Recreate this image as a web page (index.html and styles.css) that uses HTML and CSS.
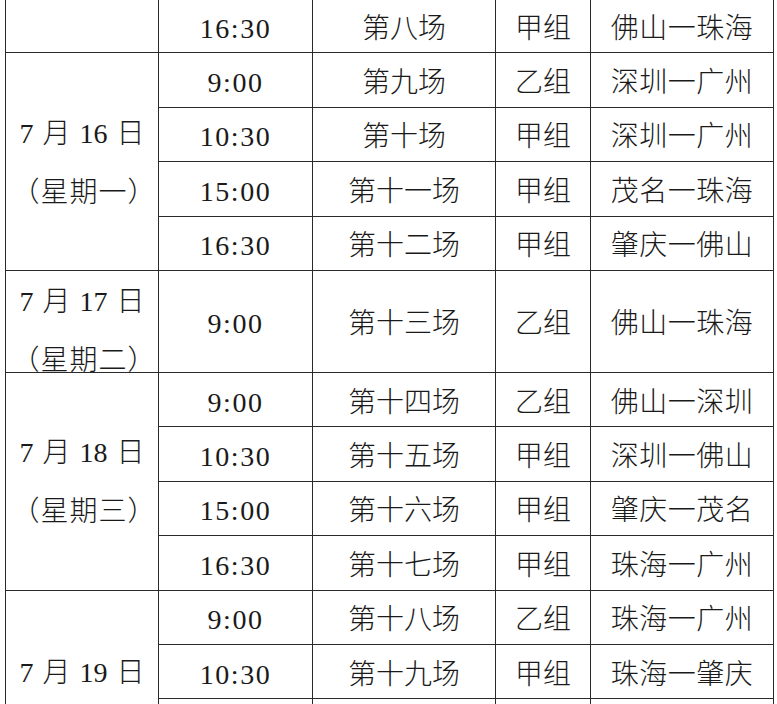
FILE: index.html
```html
<!DOCTYPE html>
<html lang="zh-CN">
<head>
<meta charset="utf-8">
<title>赛程表</title>
<link rel="stylesheet" href="styles.css">
</head>
<body>
<table class="schedule">
  <colgroup>
    <col class="c-date"><col class="c-time"><col class="c-match"><col class="c-group"><col class="c-teams">
  </colgroup>
  <tbody>
    <tr class="row first">
      <td class="date"></td><td class="time">16:30</td><td>第八场</td><td>甲组</td><td class="teams">佛山一珠海</td>
    </tr>
    <tr class="row">
      <td class="date" rowspan="4"><div class="date-text">7 月 16 日<br><span class="week">（星期一）</span></div></td>
      <td class="time">9:00</td><td>第九场</td><td>乙组</td><td class="teams">深圳一广州</td>
    </tr>
    <tr class="row"><td class="time">10:30</td><td>第十场</td><td>甲组</td><td class="teams">深圳一广州</td></tr>
    <tr class="row"><td class="time">15:00</td><td>第十一场</td><td>甲组</td><td class="teams">茂名一珠海</td></tr>
    <tr class="row"><td class="time">16:30</td><td>第十二场</td><td>甲组</td><td class="teams">肇庆一佛山</td></tr>
    <tr class="row tall">
      <td class="date clip"><div class="date-text clipped">7 月 17 日<br><span class="week">（星期二）</span></div></td>
      <td class="time">9:00</td><td>第十三场</td><td>乙组</td><td class="teams">佛山一珠海</td>
    </tr>
    <tr class="row">
      <td class="date" rowspan="4"><div class="date-text">7 月 18 日<br><span class="week">（星期三）</span></div></td>
      <td class="time">9:00</td><td>第十四场</td><td>乙组</td><td class="teams">佛山一深圳</td>
    </tr>
    <tr class="row"><td class="time">10:30</td><td>第十五场</td><td>甲组</td><td class="teams">深圳一佛山</td></tr>
    <tr class="row"><td class="time">15:00</td><td>第十六场</td><td>甲组</td><td class="teams">肇庆一茂名</td></tr>
    <tr class="row"><td class="time">16:30</td><td>第十七场</td><td>甲组</td><td class="teams">珠海一广州</td></tr>
    <tr class="row">
      <td class="date" rowspan="3"><div class="date-text">7 月 19 日</div></td>
      <td class="time">9:00</td><td>第十八场</td><td>乙组</td><td class="teams">珠海一广州</td>
    </tr>
    <tr class="row"><td class="time">10:30</td><td>第十九场</td><td>甲组</td><td class="teams">珠海一肇庆</td></tr>
    <tr class="row"><td class="time"></td><td></td><td></td><td></td></tr>
  </tbody>
</table>
</body>
</html>
```

FILE: styles.css
```css
html, body {
  margin: 0;
  padding: 0;
  background: #fff;
  overflow: hidden;
}

.schedule {
  border-collapse: collapse;
  table-layout: fixed;
  width: 768px;
  margin: -2px 0 0 5px;
  font-family: "Liberation Serif", "Noto Sans CJK SC", serif;
  font-size: 28px;
  font-weight: 300;
  color: #1a1a1a;
  text-spacing-trim: space-all;
}

.c-date { width: 153px; }
.c-time { width: 154px; }
.c-match { width: 183px; }
.c-group { width: 95px; }
.c-teams { width: 183px; }

.schedule td {
  border: 1px solid #2a2a2a;
  padding: 6px 0 0 0;
  text-align: center;
  vertical-align: middle;
  line-height: 32px;
  white-space: nowrap;
}

.row { height: 54.4px; }
.row.tall { height: 102px; }

.time { letter-spacing: 1.5px; }

.teams { letter-spacing: 0.5px; }

.schedule td.date {
  padding: 0 0 0 0;
}

.date-text {
  line-height: 59px;
  word-spacing: 2px;
  padding-top: 2px;
}

.week {
  letter-spacing: 1px;
  margin-left: 4px;
}

.schedule td.clip {
  vertical-align: top;
}

.clipped {
  height: 101px;
  overflow: hidden;
  padding-top: 1px;
  box-sizing: border-box;
}
```
